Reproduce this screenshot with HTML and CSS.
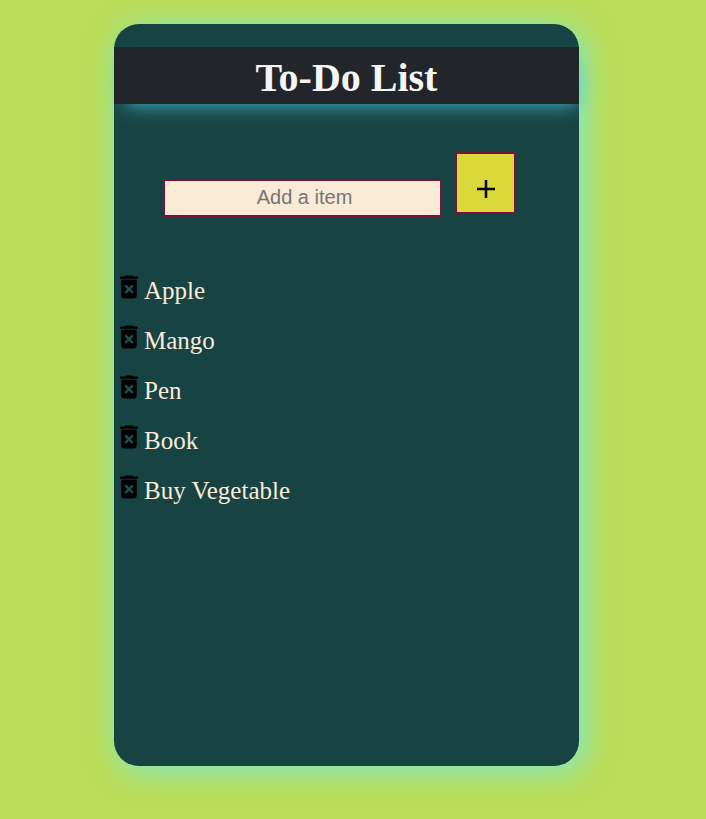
FILE: index.html
```html
<!DOCTYPE html>
<html lang="en">
<head>
<meta charset="utf-8">
<meta name="viewport" content="width=device-width, initial-scale=1">
<title>To-Do List</title>
<link rel="stylesheet" href="styles.css">
</head>
<body>
<svg class="sprite" aria-hidden="true">
  <symbol id="trash" viewBox="0 0 18 24">
    <path d="M4.800 1.400Q5 .5 6 .5h6q1 0 1.200.9H17.500a.5.5 0 0 1 .5.500V3.700H0V1.900a.5.5 0 0 1 .5-.5z"/>
    <path fill-opacity=".4" d="M1.300 3.700H16.700V5H1.300z"/>
    <path d="M1.300 5H16.700V20.500a3 3 0 0 1-3 3H4.300a3 3 0 0 1-3-3z"/>
    <path d="M5.200 10.400L12.800 18M12.800 10.400L5.200 18" stroke="#1e5252" stroke-width="2.400"/>
  </symbol>
</svg>
<main class="card">
  <h1 class="title">To-Do List</h1>
  <form class="add">
    <input class="field" type="text" placeholder="Add a item" aria-label="Add a item">
    <button class="plus" type="button" aria-label="Add">
      <svg width="18" height="18" viewBox="0 0 18 18" aria-hidden="true"><path d="M0 9H18M9 0V18" stroke="#000" stroke-width="2.500"/></svg>
    </button>
  </form>
  <ul class="items">
    <li class="item"><button class="remove" type="button" aria-label="Delete Apple"><svg width="18" height="24"><use href="#trash"/></svg></button><span>Apple</span></li>
    <li class="item"><button class="remove" type="button" aria-label="Delete Mango"><svg width="18" height="24"><use href="#trash"/></svg></button><span>Mango</span></li>
    <li class="item"><button class="remove" type="button" aria-label="Delete Pen"><svg width="18" height="24"><use href="#trash"/></svg></button><span>Pen</span></li>
    <li class="item"><button class="remove" type="button" aria-label="Delete Book"><svg width="18" height="24"><use href="#trash"/></svg></button><span>Book</span></li>
    <li class="item"><button class="remove" type="button" aria-label="Delete Buy Vegetable"><svg width="18" height="24"><use href="#trash"/></svg></button><span>Buy Vegetable</span></li>
  </ul>
</main>
</body>
</html>
```
FILE: styles.css
```css
* {
  box-sizing: border-box;
}

body {
  margin: 0;
  min-height: 100vh;
  padding: 24px 127px 53px 114px;
  display: flex;
  background: #badc58;
  font-family: "Liberation Serif", "Times New Roman", serif;
}

.sprite {
  display: none;
}

.card {
  flex: 1;
  padding-top: 23px;
  border-radius: 25px;
  background: #184343;
  box-shadow: 5px 5px 30px #7debd0;
}

.title {
  margin: 0;
  padding: 7px 0 2px;
  background: #222529;
  box-shadow: 5px 8px 20px -8px #48c4d4;
  color: #f5f5f5;
  font-size: 40px;
  line-height: 48px;
  text-align: center;
}

.add {
  display: flex;
  justify-content: center;
  align-items: flex-end;
  gap: 13px;
  margin: 48px 14px 0 0;
}

.field {
  width: 62%;
  height: 38px;
  padding: 0 0 2px 4px;
  border: 2px solid #7b113a;
  border-radius: 0;
  background: #faebd7;
  font-family: "Liberation Sans", Arial, sans-serif;
  font-size: 20px;
  text-align: center;
}

.field::placeholder {
  color: #757575;
}

.plus {
  display: flex;
  justify-content: center;
  align-items: center;
  width: 61px;
  height: 62px;
  margin-bottom: 3px;
  padding: 12px 0 0;
  border: 2px solid #7b113a;
  background: #dad83a;
}

.items {
  margin: 49px 0 0;
  padding: 0 6px;
  list-style: none;
}

.item {
  display: flex;
  align-items: center;
  gap: 6px;
  height: 50px;
  color: #faebd7;
  font-size: 25px;
  line-height: 30px;
}

.remove {
  display: flex;
  margin-bottom: 8px;
  padding: 0;
  border: 0;
  background: none;
}
```
